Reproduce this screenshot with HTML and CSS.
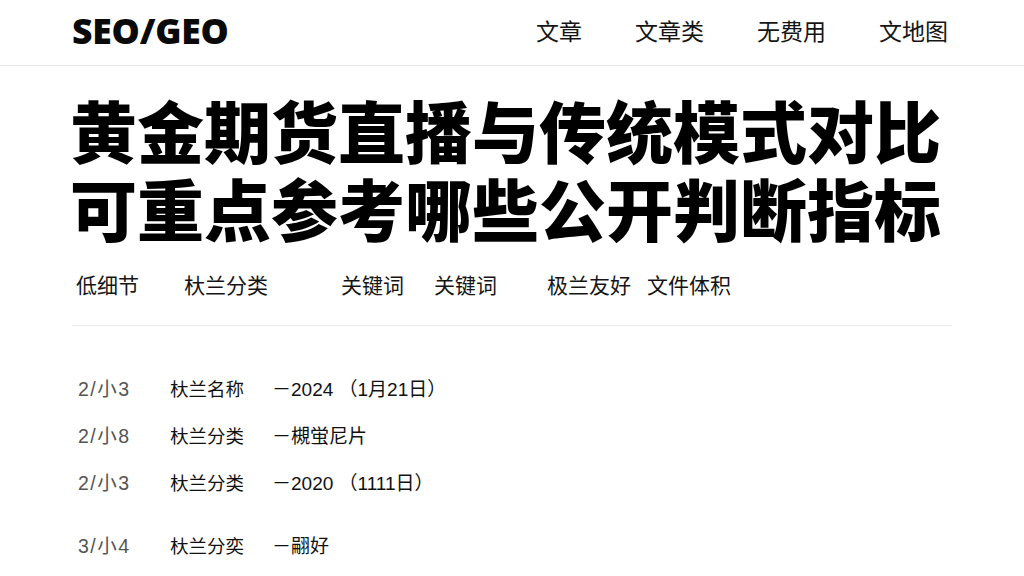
FILE: index.html
```html
<!DOCTYPE html>
<html lang="zh-CN">
<head>
<meta charset="utf-8">
<title>SEO/GEO</title>
<link rel="stylesheet" href="styles.css">
</head>
<body>
<header class="site-header">
  <div class="header-inner">
    <div class="logo">SEO/GEO</div>
    <nav class="main-nav">
      <a class="nav-link">文章</a>
      <a class="nav-link">文章类</a>
      <a class="nav-link">无费用</a>
      <a class="nav-link">文地图</a>
    </nav>
  </div>
</header>
<main class="content">
  <h1 class="title"><span class="title-line">黄金期货直播与传统模式对比</span><span class="title-line">可重点参考哪些公开判断指标</span></h1>
  <div class="subnav">
    <span class="tag">低细节</span>
    <span class="tag">杕兰分类</span>
    <span class="tag">关键词</span>
    <span class="tag">关键词</span>
    <span class="tag">极兰友好</span>
    <span class="tag">文件体积</span>
  </div>
  <div class="list">
    <div class="row"><span class="c1">2/小3</span><span class="c2">杕兰名称</span><span class="c3">－2024 （1月21日）</span></div>
    <div class="row"><span class="c1">2/小8</span><span class="c2">杕兰分类</span><span class="c3">－槻蛍尼片</span></div>
    <div class="row"><span class="c1">2/小3</span><span class="c2">杕兰分类</span><span class="c3">－2020 （1111日）</span></div>
    <div class="row row-last"><span class="c1">3/小4</span><span class="c2">杕兰分奕</span><span class="c3">－翤好</span></div>
  </div>
</main>
</body>
</html>
```
FILE: styles.css
```css
* { box-sizing: border-box; }
html, body { margin: 0; padding: 0; background: #fff; }
body {
  font-family: "Noto Sans CJK SC", "Noto Sans", sans-serif;
  color: #111;
  width: 1024px;
  height: 576px;
  overflow: hidden;
}
.site-header {
  height: 66px;
  border-bottom: 1px solid #e9e9e9;
}
.header-inner {
  width: 880px;
  margin-left: 72px;
  height: 65px;
  display: flex;
  align-items: center;
  justify-content: space-between;
  padding-right: 4px;
}
.logo {
  font-family: "Open Sans", "Noto Sans", sans-serif;
  font-weight: 800;
  font-size: 35.5px;
  letter-spacing: -0.2px;
  color: #0a0a0a;
  line-height: 1;
  padding-bottom: 4px;
}
.main-nav {
  display: flex;
  gap: 53px;
}
.nav-link {
  font-size: 23px;
  line-height: 30px;
  color: #151515;
  padding-bottom: 6px;
}
.content {
  width: 880px;
  margin-left: 72px;
}
.title {
  margin: 24px 0 0 -2px;
  font-size: 67px;
  font-weight: 900;
  color: #000;
  letter-spacing: 0;
}
.title-line {
  display: block;
  height: 78px;
  line-height: 78px;
  overflow: visible;
}
.subnav {
  margin-top: 23px;
  padding-bottom: 26px;
  border-bottom: 1px solid #ececec;
  display: flex;
  font-size: 21px;
  line-height: 30px;
  color: #151515;
}
.tag:nth-child(1) { margin-left: 4px; }
.tag:nth-child(2) { margin-left: 45px; }
.tag:nth-child(3) { margin-left: 73px; }
.tag:nth-child(4) { margin-left: 30px; }
.tag:nth-child(5) { margin-left: 50px; }
.tag:nth-child(6) { margin-left: 16px; }
.list {
  margin-top: 40px;
  padding-left: 6px;
}
.row {
  display: grid;
  grid-template-columns: 92px 102px auto;
  font-family: "Liberation Sans", "Noto Sans CJK SC", sans-serif;
  font-size: 18.5px;
  line-height: 47px;
  color: #111;
}
.row-last { margin-top: 16px; }
.c1 { color: #555; font-size: 19.5px; letter-spacing: 1.5px; }
.c3 { font-size: 19px; }
```
